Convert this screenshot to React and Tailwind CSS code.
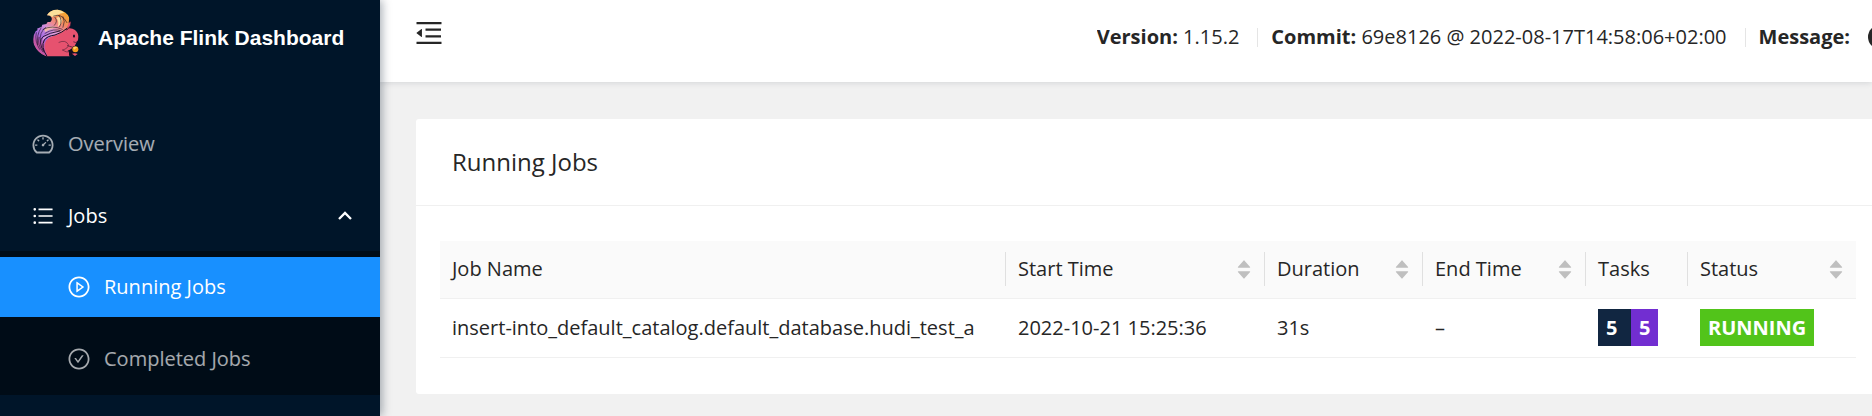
import {
  AiFillCaretDown,
  AiFillCaretUp,
  AiOutlineCheckCircle,
  AiOutlineDashboard,
  AiOutlineMenuFold,
  AiOutlinePlayCircle,
  AiOutlineUnorderedList,
} from "react-icons/ai";

function Logo() {
  return (
    <svg viewBox="24 27 138 144" className="h-12 w-[46px] shrink-0" aria-hidden="true">
      <defs>
        <linearGradient id="tail" gradientUnits="userSpaceOnUse" x1="116" y1="38" x2="44" y2="134">
          <stop offset="0" stopColor="#f7a531" />
          <stop offset="0.22" stopColor="#f08a5e" />
          <stop offset="0.38" stopColor="#ee8a92" />
          <stop offset="0.55" stopColor="#cf8fdc" />
          <stop offset="0.8" stopColor="#a76be0" />
          <stop offset="1" stopColor="#c457a8" />
        </linearGradient>
      </defs>
      <path d="M26 126 Q34 158 64 169 L134 169 Q140 160 128 152 L146 144 L154 128 Q161 122 160 110 Q160 98 150 90 Q140 83 126 86 L96 94 L50 112 Z" fill="#e6526f" />
      <path d="M112 84 Q120 70 138 64 Q140 78 126 90 Z" fill="#e6526f" stroke="#140d20" strokeWidth="2" />
      <path d="M66 46 Q74 29 98 29 Q126 34 132 52 Q134 72 124 86 Q108 102 84 108 Q64 114 60 130 Q56 146 68 169 Q38 160 27 134 Q21 110 32 94 L38 90 L36 86 L50 80 L52 74 L64 72 L68 66 L76 66 Q84 58 78 50 Q72 45 66 46 Z" fill="url(#tail)" />
      <path d="M66 46 Q74 29 98 29 Q110 30 118 38 Q106 38 96 46 Q88 52 80 50 Q74 45 66 46 Z" fill="#fbe09a" />
      <path d="M94 54 Q106 46 112 60 Q110 74 98 80 Q104 66 94 54 Z" fill="#fbd9a0" />
      <path d="M58 84 Q78 74 96 82 Q76 86 60 96 Z" fill="#f0b9a8" />
      <path d="M56 112 Q82 98 110 94 Q92 106 72 108 Q60 112 52 122 Z" fill="#e0a0dc" />
      <g fill="none" stroke="#140d20" strokeWidth="1.7" strokeLinecap="round">
        <path d="M86 48 Q110 38 126 68" />
        <path d="M90 52 Q100 64 88 76" />
        <path d="M102 46 Q114 62 104 80" />
        <path d="M114 50 Q122 64 114 82" />
        <path d="M54 88 Q82 74 112 88" />
        <path d="M60 100 Q86 84 108 92" />
        <path d="M48 84 Q34 104 38 134" />
        <path d="M62 82 Q42 98 46 124" />
        <path d="M34 98 Q28 124 44 148" />
        <path d="M42 112 Q36 134 54 156" />
        <path d="M66 169 Q46 140 58 120 Q66 108 90 105 Q112 98 126 85" strokeWidth="3" />
        <path d="M56 154 Q38 126 54 110 Q74 98 104 93" strokeWidth="2.6" />
        <path d="M102 127 Q122 118 130 134 Q130 146 112 150 Q124 158 134 156" strokeWidth="1.3" />
        <path d="M146 126 Q152 130 158 125" />
        <path d="M128 137 L144 142" />
      </g>
      <ellipse cx="147" cy="108" rx="3" ry="4.5" fill="#140d20" />
      <path d="M134 153 L146 138 L162 140 L162 171 L142 171 Z" fill="#001529" />
      <path d="M132 153 Q142 144 150 154 Q150 164 142 164 L132 168 Z" fill="#140d20" />
      <circle cx="151" cy="148" r="9" fill="#f59e1c" />
      <path d="M144 144 Q150 137 158 142 Q152 144 149 149 Z" fill="#fbd36a" />
      <path d="M141 161 Q150 158 158 162 L150 168 Z" fill="#e6526f" />
    </svg>
  );
}

function ChevronUp() {
  return (
    <svg viewBox="0 0 14 10" className="h-[10px] w-[14px]" aria-hidden="true">
      <path d="M1 8 L7 2 L13 8" fill="none" stroke="currentColor" strokeWidth="2.3" />
    </svg>
  );
}

function NavLink({ icon: Icon, label, className }) {
  return (
    <a href="#" className={`flex h-[60px] items-center gap-[13px] ${className}`}>
      <Icon className="size-6" />
      <span>{label}</span>
    </a>
  );
}

function Sidebar() {
  return (
    <aside className="relative z-10 w-[380px] shrink-0 bg-[#001529] text-white/65 shadow-[2px_0_9px_rgba(0,21,41,0.35)]">
      <div className="flex h-24 items-start gap-[19px] pt-[9px] pl-[33px]">
        <Logo />
        <h1 className="pt-[14px] font-['Liberation_Sans',Arial,sans-serif] text-[21px] leading-[30px] font-bold whitespace-nowrap text-white">
          Apache Flink Dashboard
        </h1>
      </div>
      <nav className="pt-[18px]">
        <NavLink icon={AiOutlineDashboard} label="Overview" className="pl-[31px]" />
        <button type="button" aria-expanded="true" className="mt-3 flex h-[60px] w-full items-center gap-[13px] pr-7 pl-[31px] text-white">
          <AiOutlineUnorderedList className="size-6" />
          <span className="flex-1 text-left">Jobs</span>
          <ChevronUp />
        </button>
        <div className="mt-[5px] flex flex-col gap-3 bg-[#000c17] py-[6px]">
          <NavLink icon={AiOutlinePlayCircle} label="Running Jobs" className="bg-[#1890ff] pl-[67px] text-white" />
          <NavLink icon={AiOutlineCheckCircle} label="Completed Jobs" className="pl-[67px]" />
        </div>
      </nav>
    </aside>
  );
}

function Divider() {
  return <span className="mr-[13px] ml-[18px] h-[19px] w-px bg-black/10" />;
}

function TopBar() {
  return (
    <header className="relative flex h-[82px] items-start justify-between bg-white pl-[33px] shadow-[0_1px_6px_rgba(0,21,41,0.12)]">
      <button type="button" aria-label="Collapse menu" className="mt-[17px]">
        <AiOutlineMenuFold className="size-8" />
      </button>
      <div className="flex h-[74px] items-center overflow-hidden whitespace-nowrap">
        <span><strong>Version:</strong> 1.15.2</span>
        <Divider />
        <span><strong>Commit:</strong> 69e8126 @ 2022-08-17T14:58:06+02:00</span>
        <Divider />
        <strong>Message:</strong>
        <button type="button" aria-label="Show commit message" className="-mr-5 ml-[18px] size-6 rounded-full bg-[#262626]" />
      </div>
    </header>
  );
}

const columns = [
  { title: "Job Name", width: "w-auto" },
  { title: "Start Time", width: "w-[259px]", sortable: true },
  { title: "Duration", width: "w-[158px]", sortable: true },
  { title: "End Time", width: "w-[163px]", sortable: true },
  { title: "Tasks", width: "w-[102px]" },
  { title: "Status", width: "w-[168px]", sortable: true },
];

function Sorter({ title }) {
  return (
    <button type="button" aria-label={`Sort by ${title}`} className="flex flex-col text-[#bfbfbf]">
      <AiFillCaretUp className="size-[18px]" />
      <AiFillCaretDown className="-mt-[7px] size-[18px]" />
    </button>
  );
}

function JobsTable() {
  return (
    <table className="w-full table-fixed border-collapse text-left">
      <thead>
        <tr className="h-[57px] border-b border-[#f0f0f0] bg-[#fafafa]">
          {columns.map((c, i) => (
            <th key={c.title} scope="col" className={`p-0 font-medium ${c.width}`}>
              <div className={`flex h-[34px] items-center justify-between pr-[11px] pl-3 ${i < columns.length - 1 ? "border-r border-black/10" : ""}`}>
                {c.title}
                {c.sortable && <Sorter title={c.title} />}
              </div>
            </th>
          ))}
        </tr>
      </thead>
      <tbody>
        <tr className="h-[59px] border-b border-[#f0f0f0]">
          <td className="px-3 whitespace-nowrap">insert-into_default_catalog.default_database.hudi_test_a</td>
          <td className="px-3 whitespace-nowrap">2022-10-21 15:25:36</td>
          <td className="px-3">31s</td>
          <td className="px-3">–</td>
          <td className="px-3">
            <div className="flex leading-[37px] font-bold text-white">
              <span className="w-[33px] bg-[#112641] pl-2">5</span>
              <span className="w-[27px] bg-[#722ed1] pl-2">5</span>
            </div>
          </td>
          <td className="px-3">
            <span className="block w-fit bg-[#52c41a] px-2 leading-[37px] font-bold text-white">RUNNING</span>
          </td>
        </tr>
      </tbody>
    </table>
  );
}

export default function App() {
  return (
    <div className="flex min-h-screen overflow-hidden bg-[#f1f1f1] font-['Open_Sans','Segoe_UI',sans-serif] text-[20px] leading-[30px] text-[#262626]">
      <Sidebar />
      <div className="min-w-0 flex-1">
        <TopBar />
        <main className="pt-[37px] pl-9">
          <section className="rounded-l-[3px] bg-white">
            <h2 className="border-b border-[#f0f0f0] px-9 py-7 text-[24px] leading-[30px] font-medium">Running Jobs</h2>
            <div className="pt-[35px] pr-4 pb-9 pl-6">
              <JobsTable />
            </div>
          </section>
        </main>
      </div>
    </div>
  );
}
